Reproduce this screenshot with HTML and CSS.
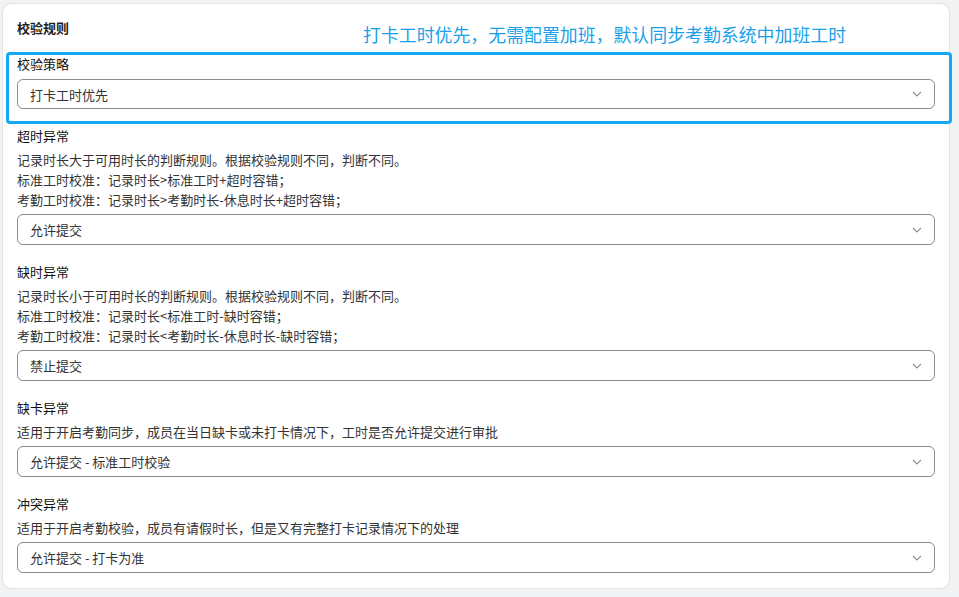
FILE: index.html
```html
<html lang="zh">
<head>
    <meta charset="utf-8">
    <title>校验规则</title>
    <link rel="stylesheet" href="styles.css">
</head>
<body>
<div class="card">
    <div class="card-title">校验规则</div>

    <div class="field first">
        <div class="label">校验策略</div>
        <div class="select">
            <span>打卡工时优先</span>
            <svg class="arrow" viewBox="0 0 10 6"><path d="M1 1l4 4 4-4" fill="none" stroke="currentColor" stroke-width="1.2"/></svg>
        </div>
    </div>

    <div class="field">
        <div class="label">超时异常</div>
        <div class="desc">
            <p>记录时长大于可用时长的判断规则。根据校验规则不同，判断不同。</p>
            <p>标准工时校准：记录时长&gt;标准工时+超时容错；</p>
            <p>考勤工时校准：记录时长&gt;考勤时长-休息时长+超时容错；</p>
        </div>
        <div class="select">
            <span>允许提交</span>
            <svg class="arrow" viewBox="0 0 10 6"><path d="M1 1l4 4 4-4" fill="none" stroke="currentColor" stroke-width="1.2"/></svg>
        </div>
    </div>

    <div class="field">
        <div class="label">缺时异常</div>
        <div class="desc">
            <p>记录时长小于可用时长的判断规则。根据校验规则不同，判断不同。</p>
            <p>标准工时校准：记录时长&lt;标准工时-缺时容错；</p>
            <p>考勤工时校准：记录时长&lt;考勤时长-休息时长-缺时容错；</p>
        </div>
        <div class="select">
            <span>禁止提交</span>
            <svg class="arrow" viewBox="0 0 10 6"><path d="M1 1l4 4 4-4" fill="none" stroke="currentColor" stroke-width="1.2"/></svg>
        </div>
    </div>

    <div class="field">
        <div class="label">缺卡异常</div>
        <div class="desc">
            <p>适用于开启考勤同步，成员在当日缺卡或未打卡情况下，工时是否允许提交进行审批</p>
        </div>
        <div class="select">
            <span>允许提交 - 标准工时校验</span>
            <svg class="arrow" viewBox="0 0 10 6"><path d="M1 1l4 4 4-4" fill="none" stroke="currentColor" stroke-width="1.2"/></svg>
        </div>
    </div>

    <div class="field">
        <div class="label">冲突异常</div>
        <div class="desc">
            <p>适用于开启考勤校验，成员有请假时长，但是又有完整打卡记录情况下的处理</p>
        </div>
        <div class="select">
            <span>允许提交 - 打卡为准</span>
            <svg class="arrow" viewBox="0 0 10 6"><path d="M1 1l4 4 4-4" fill="none" stroke="currentColor" stroke-width="1.2"/></svg>
        </div>
    </div>

    <div class="note">打卡工时优先，无需配置加班，默认同步考勤系统中加班工时</div>
    <div class="highlight"></div>
</div>
</body>
</html>
```

FILE: styles.css
```css
*,
*:before,
*:after {
    margin: 0;
    padding: 0;
    box-sizing: border-box;
}

body {
    background-color: #f2f3f5;
    font-family: "Noto Sans CJK SC", "Noto Sans", sans-serif;
    font-size: 13px;
    color: #333333;
}

.card {
    position: relative;
    width: 948px;
    margin: 3px 0 0 2px;
    padding: 14px 14px 15px 14px;
    background-color: #ffffff;
    border: 1px solid #e4e5e8;
    border-radius: 10px;
}

.card-title {
    font-weight: 700;
    line-height: 20px;
    color: #1f1f1f;
}

.field {
    margin-top: 17px;
}

.field.first {
    margin-top: 16px;
}

.label {
    font-weight: 400;
    line-height: 20px;
    color: #111111;
}

.desc {
    margin-top: 4px;
    line-height: 20px;
    color: #333333;
}

.select {
    display: flex;
    align-items: center;
    justify-content: space-between;
    height: 31px;
    margin-top: 4px;
    padding: 0 12px 0 12px;
    border: 1px solid #8c8c8c;
    border-radius: 6px;
    color: #333333;
}

.field.first .select {
    height: 30px;
    margin-top: 5px;
}

.select .arrow {
    width: 10px;
    height: 6px;
    color: #8a909c;
}

.note {
    position: absolute;
    left: 360px;
    top: 18px;
    font-size: 17.9px;
    line-height: 24px;
    color: #1a9fe8;
}

.highlight {
    position: absolute;
    left: 3px;
    top: 48px;
    width: 946px;
    height: 72px;
    border: 3px solid #14a9f4;
    border-radius: 4px;
}
```
